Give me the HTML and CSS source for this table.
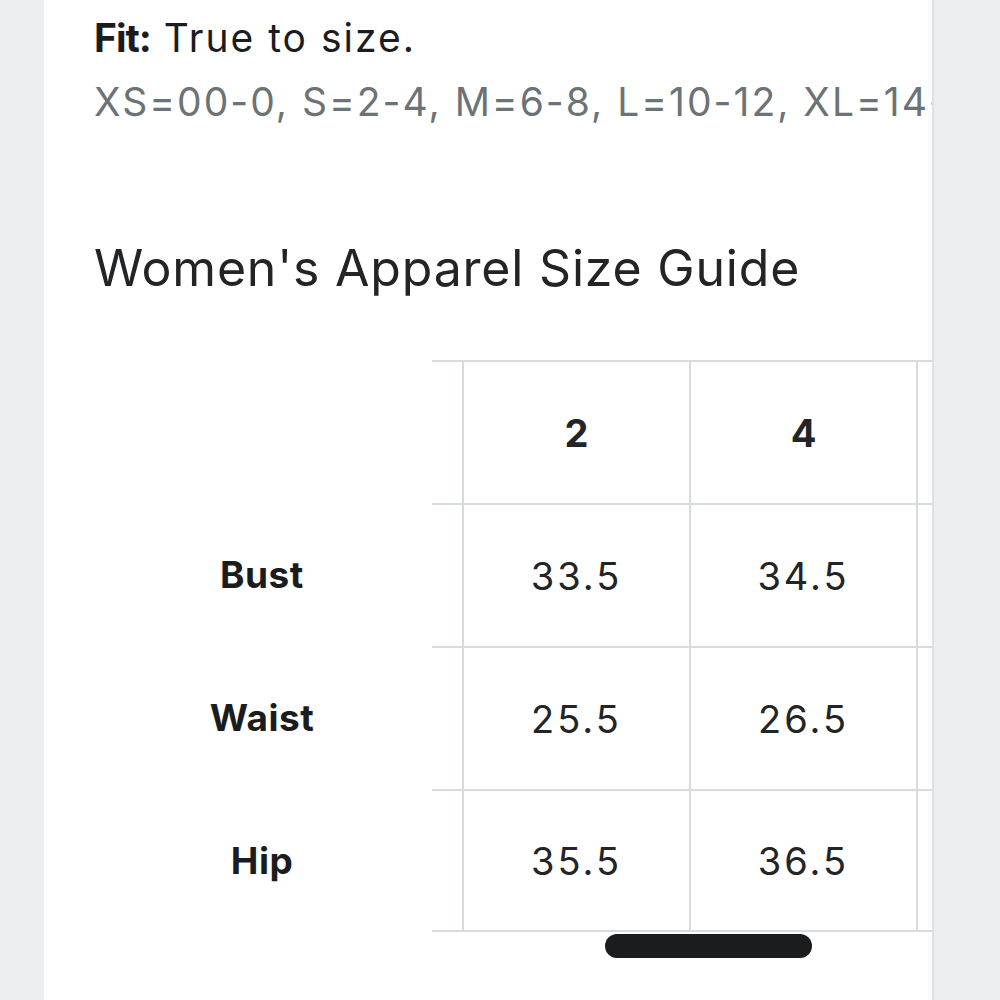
FILE: index.html
```html
<!DOCTYPE html>
<html lang="en">
<head>
    <meta charset="UTF-8">
    <meta name="viewport" content="width=device-width, initial-scale=1.0">
    <title>Women's Apparel Size Guide</title>
    <link rel="stylesheet" href="styles.css">
</head>
<body>
    <div class="screen">
        <div class="sheet">
            <p class="fit"><strong>Fit:</strong> True to size.</p>
            <p class="fit-range">XS=00-0, S=2-4, M=6-8, L=10-12, XL=14-16</p>

            <h2 class="guide-title">Women's Apparel Size Guide</h2>

            <div class="size-table">
                <div class="size-row head">
                    <div class="label"></div>
                    <div class="cells">
                        <div class="gap"></div>
                        <div class="cell">2</div>
                        <div class="cell">4</div>
                        <div class="cell"></div>
                    </div>
                </div>
                <div class="size-row">
                    <div class="label">Bust</div>
                    <div class="cells">
                        <div class="gap"></div>
                        <div class="cell">33.5</div>
                        <div class="cell">34.5</div>
                        <div class="cell"></div>
                    </div>
                </div>
                <div class="size-row">
                    <div class="label">Waist</div>
                    <div class="cells">
                        <div class="gap"></div>
                        <div class="cell">25.5</div>
                        <div class="cell">26.5</div>
                        <div class="cell"></div>
                    </div>
                </div>
                <div class="size-row last">
                    <div class="label">Hip</div>
                    <div class="cells">
                        <div class="gap"></div>
                        <div class="cell">35.5</div>
                        <div class="cell">36.5</div>
                        <div class="cell"></div>
                    </div>
                </div>
            </div>

            <div class="home-bar"></div>
        </div>
    </div>
</body>
</html>
```

FILE: styles.css
```css
html, body {
    margin: 0;
    padding: 0;
}
body {
    font-family: Inter, "Liberation Sans", Arial, sans-serif;
    background: #eceeef;
    color: #1b1c1e;
}
.screen {
    height: 1000px;
    overflow: hidden;
    padding-left: 44px;
}
.sheet {
    position: relative;
    width: 838px;
    height: 1000px;
    padding: 6px 0 0 50px;
    background: #fff;
    border-right: 2px solid #dde1e3;
    overflow: hidden;
}
.fit,
.fit-range {
    margin: 0;
    font-size: 39px;
    line-height: 64px;
    letter-spacing: 2px;
    white-space: nowrap;
}
.fit strong {
    font-weight: 700;
    letter-spacing: -1px;
}
.fit-range {
    color: #6c7376;
}
.guide-title {
    margin: 102px 0 60px;
    font-size: 50px;
    font-weight: 400;
    line-height: 64px;
    letter-spacing: 0.8px;
    color: #232426;
}
.size-table {
    width: 840px;
    margin-left: -2px;
}
.size-row {
    display: flex;
    height: 143px;
}
.label {
    width: 340px;
    flex: none;
    display: flex;
    align-items: center;
    justify-content: center;
    font-size: 37px;
    font-weight: 700;
    letter-spacing: 0.5px;
}
.cells {
    display: flex;
    flex: 1;
    border-top: 2px solid #d6dbde;
}
.size-row.last .cells {
    border-bottom: 2px solid #d6dbde;
}
.gap {
    width: 30px;
    flex: none;
}
.cell {
    width: 225px;
    flex: none;
    display: flex;
    align-items: center;
    justify-content: center;
    border-left: 2px solid #d6dbde;
    font-size: 38px;
    letter-spacing: 3px;
    color: #232426;
}
.head .cell {
    font-weight: 700;
    letter-spacing: 0;
}
.home-bar {
    position: absolute;
    left: 561px;
    top: 934px;
    width: 207px;
    height: 24px;
    border-radius: 12px;
    background: #1b1c1e;
}
```
